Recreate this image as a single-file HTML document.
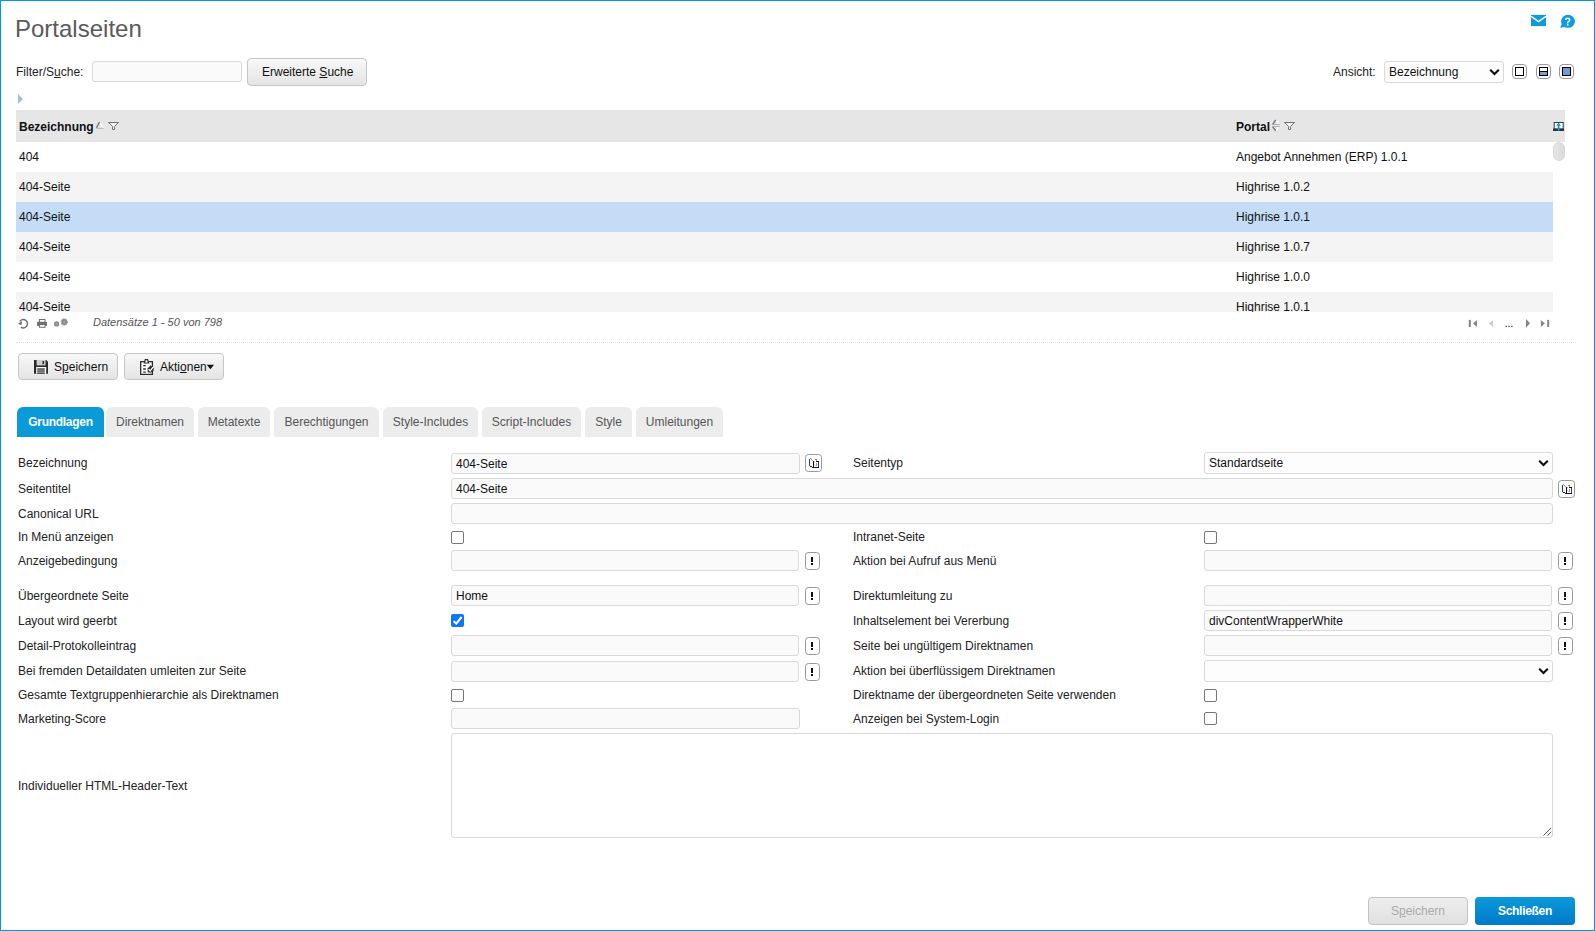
<!DOCTYPE html><html><head><meta charset="utf-8"><style>
html,body{margin:0;padding:0;background:#fff;}
body{width:1595px;height:931px;overflow:hidden;position:relative;font-family:"Liberation Sans", sans-serif;}
.t{position:absolute;white-space:nowrap;}
.b{position:absolute;}
.inp{position:absolute;box-sizing:border-box;border:1px solid #d9d9d9;border-radius:3px;background:#fafafa;}
.btn{position:absolute;box-sizing:border-box;border:1px solid #c6c6c6;border-radius:4px;background:linear-gradient(#f8f8f8,#e4e4e4);}
.sbtn{position:absolute;box-sizing:border-box;border:1px solid #999;border-radius:3.5px;background:#fff;}
.tab{position:absolute;top:407px;height:30px;border-radius:6px 6px 0 0;background:#ececec;}
u{text-decoration:underline;text-underline-offset:1px;}

</style></head><body>
<div class="b" style="left:0px;top:0px;width:1595px;height:931px;box-sizing:border-box;border:1px solid #0399de;"></div>
<div class="t" style="left:15px;top:15px;font-size:24px;line-height:28px;color:#5a5a5a;font-weight:normal;font-style:normal;">Portalseiten</div>
<svg class="b" style="left:1527px;top:10px" width="24" height="22" viewBox="0 0 24 22"><rect x="4" y="4.9" width="15" height="11.2" fill="#0e9ade"/><path d="M4.2 6.4 L11.5 11.6 L18.8 6.4" fill="none" stroke="#fff" stroke-width="1.4"/></svg>
<svg class="b" style="left:1556px;top:10px" width="24" height="22" viewBox="0 0 24 22"><ellipse cx="12" cy="11.3" rx="6.9" ry="6.5" fill="#0e9ade"/><path d="M4 17.8 L6.5 12.5 L10.5 16.8 Z" fill="#0e9ade"/><path d="M9.6 10 Q9.8 8.3 11.7 8.3 Q13.6 8.3 13.6 10 Q13.6 11.1 12.4 11.7 Q11.6 12.1 11.6 13.4" fill="none" stroke="#fff" stroke-width="1.5"/><rect x="10.8" y="14.1" width="1.7" height="1.5" fill="#fff"/></svg>
<div class="t" style="left:16px;top:65px;font-size:12px;line-height:14px;color:#222;font-weight:normal;font-style:normal;">Filter/S<u>u</u>che:</div>
<div class="inp" style="left:92px;top:61px;width:150px;height:21px;background:#fafafa"></div>
<div class="btn" style="left:247px;top:58px;width:120px;height:28px;"></div>
<div class="t" style="left:262px;top:65px;font-size:12px;line-height:14px;color:#111;font-weight:normal;font-style:normal;">Erweiterte <u>S</u>uche</div>
<div class="t" style="left:1333px;top:65px;font-size:12px;line-height:14px;color:#222;font-weight:normal;font-style:normal;">Ansicht:</div>
<div class="inp" style="left:1384px;top:61px;width:120px;height:22px;background:#fdfdfd"></div>
<div class="t" style="left:1389px;top:65px;font-size:12px;line-height:14px;color:#111;font-weight:normal;font-style:normal;">Bezeichnung</div>
<svg class="b" style="left:1489px;top:68px" width="11" height="8" viewBox="0 0 11 8"><path d="M1.2 1.8 L5.5 6 L9.8 1.8" fill="none" stroke="#111" stroke-width="2.2"/></svg>
<div class="b" style="left:1512px;top:64px;width:15px;height:15px;box-sizing:border-box;border:1px solid #9a9a9a;border-radius:4px;background:#fff"></div>
<div class="b" style="left:1515px;top:67px;width:9px;height:9px;box-sizing:border-box;border:1.5px solid #000;background:#fff"></div>
<div class="b" style="left:1536px;top:64px;width:15px;height:15px;box-sizing:border-box;border:1px solid #9a9a9a;border-radius:4px;background:#fff"></div>
<div class="b" style="left:1539px;top:67px;width:9px;height:9px;box-sizing:border-box;border:1.5px solid #000;background:linear-gradient(#fff 0,#fff 40%,#000 40%,#000 55%,#7a9fd0 55%)"></div>
<div class="b" style="left:1559px;top:64px;width:15px;height:15px;box-sizing:border-box;border:1px solid #9a9a9a;border-radius:4px;background:#fff"></div>
<div class="b" style="left:1562px;top:67px;width:9px;height:9px;box-sizing:border-box;border:1.5px solid #000;background:#6e9ad4"></div>
<svg class="b" style="left:17px;top:93px" width="8" height="12" viewBox="0 0 8 12"><path d="M1 1 L6 6 L1 11 Z" fill="#9fc4cc"/></svg>
<div class="b" style="left:16px;top:110px;width:1549px;height:32px;background:#e6e6e6"></div>
<div class="t" style="left:19px;top:120px;font-size:12px;line-height:14px;color:#111;font-weight:bold;font-style:normal;">Bezeichnung</div>
<svg class="b" style="left:92px;top:116px" width="30" height="18" viewBox="0 0 30 18"><path d="M4.5 12.3 L11.8 12.3" stroke="#b4b4b4" stroke-width="1"/><path d="M7.6 6 L11.3 12" stroke="#fff" stroke-width="1.2"/><path d="M4.4 11.8 L7.6 6" stroke="#6e6e6e" stroke-width="1.3"/><path d="M16.5 6.5 L26.5 6.5 L22.6 10.3 L22.6 13.5 L20.5 13.5 L20.5 10.3 Z" fill="#fff" fill-opacity="0.6" stroke="#707070" stroke-width="1"/></svg>
<div class="t" style="left:1236px;top:120px;font-size:12px;line-height:14px;color:#111;font-weight:bold;font-style:normal;">Portal</div>
<svg class="b" style="left:1266px;top:116px" width="32" height="18" viewBox="0 0 32 18"><path d="M6 8.5 L13.8 8.5 M6 10.5 L13.8 10.5" stroke="#b0b0b0" stroke-width="1"/><path d="M9.8 4 L12.8 8" stroke="#fff" stroke-width="1.2"/><path d="M9.8 15 L12.8 11" stroke="#fff" stroke-width="1.2"/><path d="M6.8 8.2 L9.8 4" stroke="#6e6e6e" stroke-width="1.3"/><path d="M6.8 11 L9.8 14.8" stroke="#6e6e6e" stroke-width="1.3"/><path d="M18.5 6.5 L28.5 6.5 L24.6 10.3 L24.6 13.5 L22.5 13.5 L22.5 10.3 Z" fill="#fff" fill-opacity="0.6" stroke="#707070" stroke-width="1"/></svg>
<svg class="b" style="left:1548px;top:116px" width="22" height="18" viewBox="0 0 22 18"><rect x="6.2" y="6.5" width="9" height="6.5" fill="#fff" stroke="#3a3a3a" stroke-width="1"/><rect x="5" y="12.6" width="11" height="2.4" fill="#333"/><path d="M10.6 6.6 L8.2 9.8 L9.7 9.8 L9.7 14.8 L11.5 14.8 L11.5 9.8 L13 9.8 Z" fill="#0e9ade"/></svg>
<div class="b" style="left:16px;top:142px;width:1537px;height:170px;overflow:hidden">
<div class="b" style="left:0;top:0px;width:1537px;height:30px;background:#ffffff"></div>
<div class="t" style="left:3px;top:8px;font-size:12px;line-height:14px;color:#111">404</div>
<div class="t" style="left:1220px;top:8px;font-size:12px;line-height:14px;color:#111">Angebot Annehmen (ERP) 1.0.1</div>
<div class="b" style="left:0;top:30px;width:1537px;height:30px;background:#f4f4f4"></div>
<div class="t" style="left:3px;top:38px;font-size:12px;line-height:14px;color:#111">404-Seite</div>
<div class="t" style="left:1220px;top:38px;font-size:12px;line-height:14px;color:#111">Highrise 1.0.2</div>
<div class="b" style="left:0;top:60px;width:1537px;height:30px;background:#c4dcf6"></div>
<div class="t" style="left:3px;top:68px;font-size:12px;line-height:14px;color:#111">404-Seite</div>
<div class="t" style="left:1220px;top:68px;font-size:12px;line-height:14px;color:#111">Highrise 1.0.1</div>
<div class="b" style="left:0;top:90px;width:1537px;height:30px;background:#f4f4f4"></div>
<div class="t" style="left:3px;top:98px;font-size:12px;line-height:14px;color:#111">404-Seite</div>
<div class="t" style="left:1220px;top:98px;font-size:12px;line-height:14px;color:#111">Highrise 1.0.7</div>
<div class="b" style="left:0;top:120px;width:1537px;height:30px;background:#ffffff"></div>
<div class="t" style="left:3px;top:128px;font-size:12px;line-height:14px;color:#111">404-Seite</div>
<div class="t" style="left:1220px;top:128px;font-size:12px;line-height:14px;color:#111">Highrise 1.0.0</div>
<div class="b" style="left:0;top:150px;width:1537px;height:30px;background:#f4f4f4"></div>
<div class="t" style="left:3px;top:158px;font-size:12px;line-height:14px;color:#111">404-Seite</div>
<div class="t" style="left:1220px;top:158px;font-size:12px;line-height:14px;color:#111">Highrise 1.0.1</div>
</div>
<div class="b" style="left:1553px;top:142px;width:12px;height:19px;border-radius:6px;background:linear-gradient(90deg,#e6e6e6,#dadada);box-sizing:border-box;border:1px solid #d8d8d8"></div>
<svg class="b" style="left:14px;top:312px" width="60" height="22" viewBox="0 0 60 22"><path d="M5.8 9.4 A4.2 4.2 0 1 1 6.9 15.2" fill="none" stroke="#6a6a6a" stroke-width="1.4"/><path d="M4 11.6 L8.2 9.2 L7.3 13.2 Z" fill="#6a6a6a"/><rect x="25.4" y="7.5" width="5.6" height="3" fill="#fff" stroke="#707070" stroke-width="1"/><rect x="23" y="9.8" width="10" height="4.2" rx="0.8" fill="#707070"/><rect x="25.4" y="12.5" width="5.6" height="2.8" fill="#fff" stroke="#707070" stroke-width="1"/><circle cx="42.6" cy="11.9" r="2.6" fill="#8a8a8a"/><circle cx="42.6" cy="11.9" r="0.9" fill="#aaa"/><circle cx="50.2" cy="10" r="2.9" fill="#8a8a8a"/><circle cx="50.2" cy="10" r="3.2" fill="none" stroke="#8a8a8a" stroke-width="1.1" stroke-dasharray="1 0.9"/><circle cx="50.2" cy="10" r="1" fill="#b0b0b0"/></svg>
<div class="t" style="left:93px;top:315px;font-size:11px;line-height:14px;color:#555;font-weight:normal;font-style:italic;">Datens&auml;tze 1 - 50 von 798</div>
<svg class="b" style="left:1455px;top:310px" width="105" height="25" viewBox="0 0 105 25"><rect x="13.8" y="9.9" width="2" height="7.1" fill="#858585"/><path d="M22 9.9 L18 13.45 L22 17 Z" fill="#858585"/><path d="M38.2 9.9 L33.9 13.45 L38.2 17 Z" fill="#cfcfcf"/><rect x="50.6" y="15.8" width="1.3" height="1.3" fill="#444"/><rect x="53.4" y="15.8" width="1.3" height="1.3" fill="#444"/><rect x="56.2" y="15.8" width="1.3" height="1.3" fill="#444"/><path d="M71 8.9 L75 13.35 L71 17.8 Z" fill="#858585"/><path d="M85.9 9.9 L89.9 13.45 L85.9 17 Z" fill="#858585"/><rect x="92.2" y="9.9" width="2" height="7.1" fill="#858585"/></svg>
<div class="b" style="left:16px;top:342px;width:1560px;height:0;border-top:1px dotted #ddd"></div>
<div class="btn" style="left:18px;top:353px;width:100px;height:27px;"></div>
<svg class="b" style="left:30px;top:356px" width="22" height="22" viewBox="0 0 22 22"><path d="M4 4 L16.3 4 L18 5.7 L18 17.8 L4 17.8 Z" fill="#2a2a2a"/><rect x="6.6" y="4" width="9" height="5.4" fill="#cfcfcf"/><rect x="12.5" y="5" width="1.6" height="3.2" fill="#2a2a2a"/><rect x="6.2" y="11" width="10" height="6.8" fill="#fff"/><rect x="7.2" y="12.4" width="7.6" height="1.3" fill="#2a2a2a"/><rect x="7.2" y="14.4" width="7.6" height="1.3" fill="#2a2a2a"/><rect x="7.2" y="16.5" width="7.6" height="1.3" fill="#2a2a2a"/></svg>
<div class="t" style="left:54px;top:360px;font-size:12px;line-height:14px;color:#111;font-weight:normal;font-style:normal;">S<u>p</u>eichern</div>
<div class="btn" style="left:124px;top:353px;width:100px;height:27px;"></div>
<svg class="b" style="left:136px;top:356px" width="22" height="22" viewBox="0 0 22 22"><path d="M8.5 5.6 L4.7 5.6 L4.7 18.4 L16.4 18.4 L16.4 5.6 L12.3 5.6" fill="#fff" stroke="#2a2a2a" stroke-width="1.3"/><path d="M8.3 7 L9.3 3.6 L11.6 3.6 L12.6 7 Z" fill="#fff" stroke="#2a2a2a" stroke-width="1.2"/><path d="M7.2 9.6 L9.8 9.6 M7.2 13 L9.8 13 M7.2 16.2 L9.8 16.2" stroke="#2a2a2a" stroke-width="1.3"/><path d="M11.6 12.5 L14.6 9.3 L17.6 12.3 L17.6 14.8 L14.8 16.8 L11.6 16.2 Z" fill="#2a2a2a"/><path d="M12.6 13.2 L14.2 15 L17 11.2" fill="none" stroke="#fff" stroke-width="1.3"/></svg>
<div class="t" style="left:160px;top:360px;font-size:12px;line-height:14px;color:#111;font-weight:normal;font-style:normal;">Akti<u>o</u>nen</div>
<svg class="b" style="left:206px;top:364px" width="9" height="6" viewBox="0 0 9 6"><path d="M0.8 0.8 L8 0.8 L4.4 5.2 Z" fill="#111"/></svg>
<div class="tab" style="left:17px;width:87px;background:#0a9ad8;"></div>
<div class="t" style="left:17px;top:415px;width:87px;text-align:center;font-size:12px;line-height:14px;color:#fff;font-weight:bold;letter-spacing:-0.3px">Grundlagen</div>
<div class="tab" style="left:106px;width:88px;"></div>
<div class="t" style="left:106px;top:415px;width:88px;text-align:center;font-size:12px;line-height:14px;color:#555">Direktnamen</div>
<div class="tab" style="left:198px;width:72px;"></div>
<div class="t" style="left:198px;top:415px;width:72px;text-align:center;font-size:12px;line-height:14px;color:#555">Metatexte</div>
<div class="tab" style="left:274px;width:105px;"></div>
<div class="t" style="left:274px;top:415px;width:105px;text-align:center;font-size:12px;line-height:14px;color:#555">Berechtigungen</div>
<div class="tab" style="left:383px;width:95px;"></div>
<div class="t" style="left:383px;top:415px;width:95px;text-align:center;font-size:12px;line-height:14px;color:#555">Style-Includes</div>
<div class="tab" style="left:482px;width:99px;"></div>
<div class="t" style="left:482px;top:415px;width:99px;text-align:center;font-size:12px;line-height:14px;color:#555">Script-Includes</div>
<div class="tab" style="left:585px;width:47px;"></div>
<div class="t" style="left:585px;top:415px;width:47px;text-align:center;font-size:12px;line-height:14px;color:#555">Style</div>
<div class="tab" style="left:636px;width:87px;"></div>
<div class="t" style="left:636px;top:415px;width:87px;text-align:center;font-size:12px;line-height:14px;color:#555">Umleitungen</div>
<div class="t" style="left:18px;top:456px;font-size:12px;line-height:14px;color:#222;font-weight:normal;font-style:normal;">Bezeichnung</div>
<div class="t" style="left:18px;top:482px;font-size:12px;line-height:14px;color:#222;font-weight:normal;font-style:normal;">Seitentitel</div>
<div class="t" style="left:18px;top:507px;font-size:12px;line-height:14px;color:#222;font-weight:normal;font-style:normal;">Canonical URL</div>
<div class="t" style="left:18px;top:530px;font-size:12px;line-height:14px;color:#222;font-weight:normal;font-style:normal;">In Men&uuml; anzeigen</div>
<div class="t" style="left:18px;top:554px;font-size:12px;line-height:14px;color:#222;font-weight:normal;font-style:normal;">Anzeigebedingung</div>
<div class="t" style="left:18px;top:589px;font-size:12px;line-height:14px;color:#222;font-weight:normal;font-style:normal;">&Uuml;bergeordnete Seite</div>
<div class="t" style="left:18px;top:614px;font-size:12px;line-height:14px;color:#222;font-weight:normal;font-style:normal;">Layout wird geerbt</div>
<div class="t" style="left:18px;top:639px;font-size:12px;line-height:14px;color:#222;font-weight:normal;font-style:normal;">Detail-Protokolleintrag</div>
<div class="t" style="left:18px;top:664px;font-size:12px;line-height:14px;color:#222;font-weight:normal;font-style:normal;">Bei fremden Detaildaten umleiten zur Seite</div>
<div class="t" style="left:18px;top:688px;font-size:12px;line-height:14px;color:#222;font-weight:normal;font-style:normal;">Gesamte Textgruppenhierarchie als Direktnamen</div>
<div class="t" style="left:18px;top:712px;font-size:12px;line-height:14px;color:#222;font-weight:normal;font-style:normal;">Marketing-Score</div>
<div class="t" style="left:18px;top:779px;font-size:12px;line-height:14px;color:#222;font-weight:normal;font-style:normal;">Individueller HTML-Header-Text</div>
<div class="t" style="left:853px;top:456px;font-size:12px;line-height:14px;color:#222;font-weight:normal;font-style:normal;">Seitentyp</div>
<div class="t" style="left:853px;top:530px;font-size:12px;line-height:14px;color:#222;font-weight:normal;font-style:normal;">Intranet-Seite</div>
<div class="t" style="left:853px;top:554px;font-size:12px;line-height:14px;color:#222;font-weight:normal;font-style:normal;">Aktion bei Aufruf aus Men&uuml;</div>
<div class="t" style="left:853px;top:589px;font-size:12px;line-height:14px;color:#222;font-weight:normal;font-style:normal;">Direktumleitung zu</div>
<div class="t" style="left:853px;top:614px;font-size:12px;line-height:14px;color:#222;font-weight:normal;font-style:normal;">Inhaltselement bei Vererbung</div>
<div class="t" style="left:853px;top:639px;font-size:12px;line-height:14px;color:#222;font-weight:normal;font-style:normal;">Seite bei ung&uuml;ltigem Direktnamen</div>
<div class="t" style="left:853px;top:664px;font-size:12px;line-height:14px;color:#222;font-weight:normal;font-style:normal;">Aktion bei &uuml;berfl&uuml;ssigem Direktnamen</div>
<div class="t" style="left:853px;top:688px;font-size:12px;line-height:14px;color:#222;font-weight:normal;font-style:normal;">Direktname der &uuml;bergeordneten Seite verwenden</div>
<div class="t" style="left:853px;top:712px;font-size:12px;line-height:14px;color:#222;font-weight:normal;font-style:normal;">Anzeigen bei System-Login</div>
<div class="inp" style="left:451px;top:453px;width:349px;height:21px;background:#fafafa"></div>
<div class="t" style="left:456px;top:457px;font-size:12px;line-height:14px;color:#111;font-weight:normal;font-style:normal;">404-Seite</div>
<div class="b sbtn" style="left:805px;top:454px;width:17px;height:18px;"></div>
<svg class="b" style="left:803px;top:452px" width="22" height="22" viewBox="0 0 22 22" shape-rendering="crispEdges"><rect x="6" y="7" width="1" height="7" fill="#1030ff"/><rect x="7" y="6" width="1" height="1" fill="#8a8a8a"/><rect x="8" y="7" width="1" height="1" fill="#8a8a8a"/><rect x="9" y="8" width="1" height="1" fill="#a0a0a0"/><rect x="7" y="14" width="2" height="1" fill="#111"/><rect x="10" y="9" width="1" height="7" fill="#111"/><rect x="9" y="15" width="7" height="1" fill="#111"/><rect x="13" y="9" width="3" height="1" fill="#111"/><rect x="15" y="10" width="1" height="5" fill="#1030ff"/><rect x="11" y="9" width="1" height="1" fill="#f2e200"/><rect x="11" y="10" width="1" height="1" fill="#e8e070"/><rect x="11" y="12" width="1" height="1" fill="#f2e200"/><rect x="12" y="7" width="2" height="1" fill="#7a7a7a"/><rect x="13" y="8" width="1" height="1" fill="#aaa"/><rect x="13" y="11" width="1" height="3" fill="#999"/><rect x="12" y="13" width="1" height="1" fill="#ccc"/></svg>
<div class="inp" style="left:451px;top:478px;width:1102px;height:21px;background:#fafafa"></div>
<div class="t" style="left:456px;top:482px;font-size:12px;line-height:14px;color:#111;font-weight:normal;font-style:normal;">404-Seite</div>
<div class="b sbtn" style="left:1558px;top:480px;width:17px;height:18px;"></div>
<svg class="b" style="left:1556px;top:478px" width="22" height="22" viewBox="0 0 22 22" shape-rendering="crispEdges"><rect x="6" y="7" width="1" height="7" fill="#1030ff"/><rect x="7" y="6" width="1" height="1" fill="#8a8a8a"/><rect x="8" y="7" width="1" height="1" fill="#8a8a8a"/><rect x="9" y="8" width="1" height="1" fill="#a0a0a0"/><rect x="7" y="14" width="2" height="1" fill="#111"/><rect x="10" y="9" width="1" height="7" fill="#111"/><rect x="9" y="15" width="7" height="1" fill="#111"/><rect x="13" y="9" width="3" height="1" fill="#111"/><rect x="15" y="10" width="1" height="5" fill="#1030ff"/><rect x="11" y="9" width="1" height="1" fill="#f2e200"/><rect x="11" y="10" width="1" height="1" fill="#e8e070"/><rect x="11" y="12" width="1" height="1" fill="#f2e200"/><rect x="12" y="7" width="2" height="1" fill="#7a7a7a"/><rect x="13" y="8" width="1" height="1" fill="#aaa"/><rect x="13" y="11" width="1" height="3" fill="#999"/><rect x="12" y="13" width="1" height="1" fill="#ccc"/></svg>
<div class="inp" style="left:451px;top:503px;width:1102px;height:21px;background:#fafafa"></div>
<div class="b" style="left:451px;top:531px;width:13px;height:13px;box-sizing:border-box;border:1px solid #767676;border-radius:2px;background:#fff"></div>
<div class="inp" style="left:451px;top:550px;width:348px;height:21px;background:#fafafa"></div>
<div class="b sbtn" style="left:805px;top:552px;width:15px;height:18px;"></div>
<div class="b" style="left:811px;top:557px;width:2px;height:5px;background:#111"></div>
<div class="b" style="left:811px;top:563px;width:2px;height:2px;background:#111"></div>
<div class="inp" style="left:451px;top:585px;width:348px;height:21px;background:#fafafa"></div>
<div class="t" style="left:456px;top:589px;font-size:12px;line-height:14px;color:#111;font-weight:normal;font-style:normal;">Home</div>
<div class="b sbtn" style="left:805px;top:587px;width:15px;height:18px;"></div>
<div class="b" style="left:811px;top:592px;width:2px;height:5px;background:#111"></div>
<div class="b" style="left:811px;top:598px;width:2px;height:2px;background:#111"></div>
<div class="b" style="left:451px;top:614px;width:13px;height:13px;background:#0b76fa;border-radius:2px"></div>
<svg class="b" style="left:451px;top:614px" width="13" height="13" viewBox="0 0 13 13"><path d="M2.6 7.2 L5.3 9.6 L10.6 3" fill="none" stroke="#fff" stroke-width="2.1"/></svg>
<div class="inp" style="left:451px;top:635px;width:348px;height:21px;background:#fafafa"></div>
<div class="b sbtn" style="left:805px;top:637px;width:15px;height:18px;"></div>
<div class="b" style="left:811px;top:642px;width:2px;height:5px;background:#111"></div>
<div class="b" style="left:811px;top:648px;width:2px;height:2px;background:#111"></div>
<div class="inp" style="left:451px;top:661px;width:348px;height:21px;background:#fafafa"></div>
<div class="b sbtn" style="left:805px;top:663px;width:15px;height:18px;"></div>
<div class="b" style="left:811px;top:668px;width:2px;height:5px;background:#111"></div>
<div class="b" style="left:811px;top:674px;width:2px;height:2px;background:#111"></div>
<div class="b" style="left:451px;top:689px;width:13px;height:13px;box-sizing:border-box;border:1px solid #767676;border-radius:2px;background:#fff"></div>
<div class="inp" style="left:451px;top:708px;width:349px;height:21px;background:#fafafa"></div>
<div class="inp" style="left:451px;top:733px;width:1102px;height:105px;background:#fff"></div>
<svg class="b" style="left:1543px;top:827px" width="9" height="9" viewBox="0 0 9 9"><path d="M8.2 0.8 L0.5 8.5 M8.2 4.8 L4.5 8.5" stroke="#555" stroke-width="1"/></svg>
<div class="inp" style="left:1204px;top:452px;width:349px;height:22px;background:#fdfdfd"></div>
<div class="t" style="left:1209px;top:456px;font-size:12px;line-height:14px;color:#111;font-weight:normal;font-style:normal;">Standardseite</div>
<svg class="b" style="left:1538px;top:459px" width="11" height="8" viewBox="0 0 11 8"><path d="M1.2 1.8 L5.5 6 L9.8 1.8" fill="none" stroke="#111" stroke-width="2.2"/></svg>
<div class="b" style="left:1204px;top:531px;width:13px;height:13px;box-sizing:border-box;border:1px solid #767676;border-radius:2px;background:#fff"></div>
<div class="inp" style="left:1204px;top:550px;width:348px;height:21px;background:#fafafa"></div>
<div class="b sbtn" style="left:1558px;top:552px;width:15px;height:18px;"></div>
<div class="b" style="left:1564px;top:557px;width:2px;height:5px;background:#111"></div>
<div class="b" style="left:1564px;top:563px;width:2px;height:2px;background:#111"></div>
<div class="inp" style="left:1204px;top:585px;width:348px;height:21px;background:#fafafa"></div>
<div class="b sbtn" style="left:1558px;top:587px;width:15px;height:18px;"></div>
<div class="b" style="left:1564px;top:592px;width:2px;height:5px;background:#111"></div>
<div class="b" style="left:1564px;top:598px;width:2px;height:2px;background:#111"></div>
<div class="inp" style="left:1204px;top:610px;width:348px;height:21px;background:#fafafa"></div>
<div class="t" style="left:1209px;top:614px;font-size:12px;line-height:14px;color:#111;font-weight:normal;font-style:normal;">divContentWrapperWhite</div>
<div class="b sbtn" style="left:1558px;top:612px;width:15px;height:18px;"></div>
<div class="b" style="left:1564px;top:617px;width:2px;height:5px;background:#111"></div>
<div class="b" style="left:1564px;top:623px;width:2px;height:2px;background:#111"></div>
<div class="inp" style="left:1204px;top:635px;width:348px;height:21px;background:#fafafa"></div>
<div class="b sbtn" style="left:1558px;top:637px;width:15px;height:18px;"></div>
<div class="b" style="left:1564px;top:642px;width:2px;height:5px;background:#111"></div>
<div class="b" style="left:1564px;top:648px;width:2px;height:2px;background:#111"></div>
<div class="inp" style="left:1204px;top:660px;width:349px;height:22px;background:#fdfdfd"></div>
<svg class="b" style="left:1538px;top:667px" width="11" height="8" viewBox="0 0 11 8"><path d="M1.2 1.8 L5.5 6 L9.8 1.8" fill="none" stroke="#111" stroke-width="2.2"/></svg>
<div class="b" style="left:1204px;top:689px;width:13px;height:13px;box-sizing:border-box;border:1px solid #767676;border-radius:2px;background:#fff"></div>
<div class="b" style="left:1204px;top:712px;width:13px;height:13px;box-sizing:border-box;border:1px solid #767676;border-radius:2px;background:#fff"></div>
<div class="btn" style="left:1368px;top:897px;width:100px;height:28px;background:linear-gradient(#eeeeee,#e0e0e0);border-color:#c2c2c2"></div>
<div class="t" style="left:1368px;top:904px;width:100px;text-align:center;font-size:12px;line-height:14px;color:#aaa">S<u>p</u>eichern</div>
<div class="b" style="left:1475px;top:897px;width:100px;height:28px;border-radius:4px;background:linear-gradient(#0b9ad9,#0079c9)"></div>
<div class="t" style="left:1475px;top:904px;width:100px;text-align:center;font-size:12px;line-height:14px;color:#fff;font-weight:bold;letter-spacing:-0.3px">Schlie&szlig;en</div>
</body></html>
